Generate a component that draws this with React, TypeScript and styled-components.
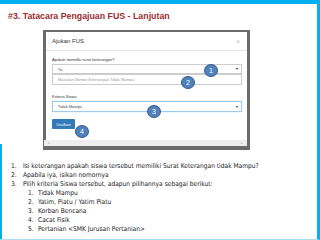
import React from "react";
import styled, { createGlobalStyle } from "styled-components";

const Global = createGlobalStyle`
  html, body { margin: 0; padding: 0; background: #fff; }
  body { font-family: "Liberation Sans", Arial, sans-serif; }
`;

const Slide = styled.div`
  position: relative;
  width: 320px;
  height: 240px;
  box-sizing: border-box;
  background: #fff;
  border-top: 4px solid #00b0f0;
  border-right: 3px solid #00b0f0;
  border-bottom: 1px solid #a8def5;
  overflow: hidden;
  &::before {
    content: "";
    position: absolute;
    left: 0;
    top: 140px;
    bottom: 0;
    width: 2px;
    background: #00b0f0;
  }
`;

const Title = styled.h1`
  margin: 0;
  padding: 7px 0 0 8px;
  height: 18px;
  box-sizing: border-box;
  font-family: "Liberation Sans", Arial, sans-serif;
  font-weight: bold;
  font-size: 8.8px;
  line-height: 10px;
  color: #9b2d30;
`;

const Shot = styled.div`
  position: relative;
  margin: 8px 0 0 43px;
  width: 207px;
  height: 120px;
  box-sizing: border-box;
  background: #6b6b6b;
  padding: 2px 3px 4px 3px;
  display: flex;
`;

const Modal = styled.div`
  flex: 1;
  background: #fff;
  display: flex;
  flex-direction: column;
  font-family: "Liberation Sans", Arial, sans-serif;
  color: #333;
`;

const ModalHeader = styled.div`
  height: 19px;
  box-sizing: border-box;
  border-bottom: 1px solid #e5e5e5;
  display: flex;
  align-items: center;
  justify-content: space-between;
  padding: 0 7px 0 6px;
  font-size: 6px;
`;

const Close = styled.span`
  font-size: 7px;
  color: #bbb;
`;

const ModalBody = styled.div`
  flex: 1;
  padding: 5px 5px 0 6px;
  display: flex;
  flex-direction: column;
`;

const Label = styled.div<{ $gap?: number }>`
  font-size: 4px;
  line-height: 5px;
  color: #333;
  margin-top: ${(p) => p.$gap ?? 0}px;
  margin-bottom: 2px;
`;

const Control = styled.div<{ $focus?: boolean; $muted?: boolean; $h: number }>`
  height: ${(p) => p.$h}px;
  box-sizing: border-box;
  border: 1px solid ${(p) => (p.$focus ? "#9ecaed" : "#ccc")};
  box-shadow: ${(p) => (p.$focus ? "0 0 1px #9ecaed" : "none")};
  display: flex;
  align-items: center;
  justify-content: space-between;
  padding: 0 3px 0 5px;
  font-size: 4px;
  color: ${(p) => (p.$muted ? "#999" : "#444")};
`;

const Caret = styled.span`
  width: 0;
  height: 0;
  border-left: 1px solid transparent;
  border-right: 1px solid transparent;
  border-top: 2px solid #333;
`;

const Button = styled.div`
  margin-top: 7px;
  width: 23px;
  height: 10px;
  background: #337ab7;
  border-radius: 1px;
  color: #fff;
  font-size: 4px;
  display: flex;
  align-items: center;
  justify-content: center;
`;

const ScrollBar = styled.div`
  height: 6px;
  background: #eee;
  margin-left: -2px;
  display: flex;
  justify-content: space-between;
  align-items: center;
  padding: 0 4px;
  font-size: 3px;
  color: #999;
`;

const Badge = styled.div<{ $x: number; $y: number }>`
  position: absolute;
  left: ${(p) => p.$x}px;
  top: ${(p) => p.$y}px;
  width: 14px;
  height: 13px;
  box-sizing: border-box;
  border-radius: 50%;
  background: #4f81bd;
  border: 1px solid #385d8a;
  color: #fff;
  font-family: "Liberation Sans", Arial, sans-serif;
  font-size: 7px;
  display: flex;
  align-items: center;
  justify-content: center;
`;

const Steps = styled.div`
  margin-top: 12px;
  font-family: "Liberation Sans Narrow", "DejaVu Sans Condensed", "Liberation Sans", sans-serif;
  font-size: 6.6px;
  line-height: 9px;
  color: #1a1a1a;
  display: flex;
  flex-direction: column;
`;

const Item = styled.div<{ $indent?: boolean }>`
  display: grid;
  grid-template-columns: ${(p) => (p.$indent ? "10px" : "12px")} auto;
  padding-left: ${(p) => (p.$indent ? 28 : 11)}px;
  white-space: nowrap;
`;

const steps: { n: number; text: string; indent?: boolean }[] = [
  { n: 1, text: "Isi keterangan apakah siswa tersebut memiliki Surat Keterangan tidak Mampu?" },
  { n: 2, text: "Apabila iya, isikan nomornya" },
  { n: 3, text: "Pilih kriteria Siswa tersebut, adapun pilihannya sebagai berikut:" },
  { n: 1, text: "Tidak Mampu", indent: true },
  { n: 2, text: "Yatim, Piatu / Yatim Piatu", indent: true },
  { n: 3, text: "Korban Bencana", indent: true },
  { n: 4, text: "Cacat Fisik", indent: true },
  { n: 5, text: "Pertanian <SMK Jurusan Pertanian>", indent: true },
];

const badges = [
  { n: 1, x: 161, y: 34 },
  { n: 2, x: 138, y: 46 },
  { n: 3, x: 104, y: 75 },
  { n: 4, x: 32, y: 95 },
];

export default function App() {
  return (
    <>
      <Global />
      <Slide>
        <Title>#3. Tatacara Pengajuan FUS - Lanjutan</Title>
        <Shot>
          <Modal>
            <ModalHeader>
              <span>Ajukan FUS</span>
              <Close>×</Close>
            </ModalHeader>
            <ModalBody>
              <Label $gap={1}>Apakah memiliki surat keterangan?</Label>
              <Control $h={10}>
                <span>Ya</span>
                <Caret />
              </Control>
              <Control $h={11} $muted>
                <span>Masukan Nomor Keterangan Tidak Mampu</span>
              </Control>
              <Label $gap={9}>Kriteria Siswa</Label>
              <Control $h={11} $focus>
                <span>Tidak Mampu</span>
                <Caret />
              </Control>
              <Button>Usulkan</Button>
            </ModalBody>
            <ScrollBar>
              <span>◂</span>
              <span>▸</span>
            </ScrollBar>
          </Modal>
          {badges.map((b) => (
            <Badge key={b.n} $x={b.x} $y={b.y}>
              {b.n}
            </Badge>
          ))}
        </Shot>
        <Steps>
          {steps.map((s, i) => (
            <Item key={i} $indent={s.indent}>
              <span>{s.n}.</span>
              <span>{s.text}</span>
            </Item>
          ))}
        </Steps>
      </Slide>
    </>
  );
}
